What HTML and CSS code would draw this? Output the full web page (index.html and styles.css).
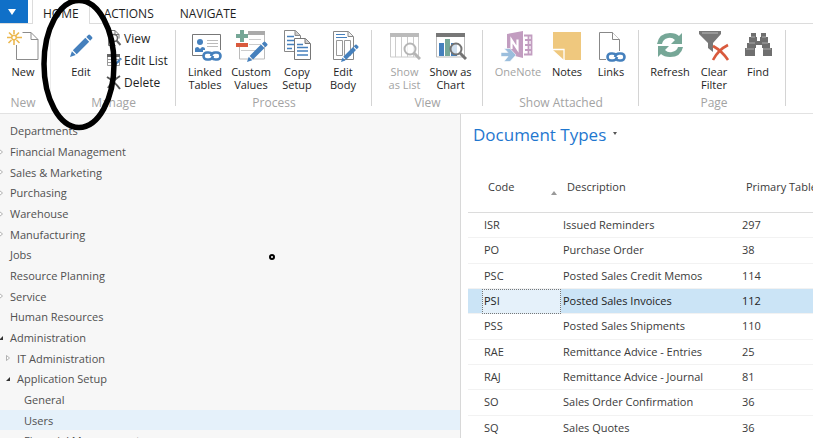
FILE: index.html
```html
<!DOCTYPE html>
<html lang="en">
<head>
<meta charset="utf-8">
<title>Document Types</title>
<link rel="stylesheet" href="styles.css">
</head>
<body>
<svg class="defs" aria-hidden="true">
  <symbol id="pencil" viewBox="0 0 24 24">
    <path d="M0 24l2-6 4 4zM3 17L16 4l4 4L7 21zM17 3l2-2q1-1 2 0l2 2q1 1 0 2l-2 2z" fill="#4580bd"/>
  </symbol>
  <symbol id="chain" viewBox="0 0 20 10">
    <g fill="none" stroke="#4580bd" stroke-width="2.6">
      <path d="M10 3Q9 1.500 6.500 1.500H5a3.500 3.500 0 0 0 0 7h2q3 0 4-3.500"/>
      <path d="M10 7q1 1.500 3.500 1.500H15a3.500 3.500 0 0 0 0-7h-2q-3 0-4 3.500"/>
    </g>
  </symbol>
  <symbol id="lens" viewBox="0 0 18 18">
    <circle cx="7" cy="7" r="5.500" fill="#fff" fill-opacity=".75" stroke="currentColor" stroke-width="2"/>
    <path d="M11 11l6 6" stroke="currentColor" stroke-width="3"/>
  </symbol>
  <symbol id="closed" viewBox="0 0 6 8"><path d="M2.500 1.500v5l3-2.500z" fill="#fff" stroke="#a0a0a0" stroke-width=".8"/></symbol>
  <symbol id="open" viewBox="0 0 6 8"><path d="M6 2v4H2z" fill="#333"/></symbol>
</svg>

<nav class="tabs">
  <button class="app-menu" aria-label="Application menu"><svg width="8" height="6"><path d="M0 0h8L4 6z" fill="#fff"/></svg></button>
  <a class="tab active" href="#">HOME</a>
  <a class="tab" href="#">ACTIONS</a>
  <a class="tab" href="#">NAVIGATE</a>
</nav>

<header class="ribbon">
  <section class="group g-new">
    <div class="tools">
      <button class="tool"><svg viewBox="0 0 32 32">
        <path d="M15.500 2.500H24l7 7V29.500H9.500V15" fill="none" stroke="#8c8c8c"/><path d="M24 2.500v7h7" fill="none" stroke="#8c8c8c"/>
        <g stroke="#ecb84f" stroke-width="1.600"><path d="M7 0v4M7 10v5M0 7.500h4M10 7.500h5M2 2.500l3 3M9.500 10l3 3M12 2.500l-3 3M4.500 10l-3 3"/></g><circle cx="7" cy="7.500" r="2.300" fill="#fff" stroke="#ecb84f" stroke-width="1.500"/></svg>New</button>
    </div>
    <h2>New</h2>
  </section>
  <section class="group g-manage">
    <div class="tools">
      <button class="tool narrow"><svg viewBox="0 0 32 32"><use href="#pencil" x="5" y="4" width="23" height="23"/></svg>Edit</button>
      <div class="stack">
        <button class="line"><svg viewBox="0 0 16 16"><path d="M2.500 15.500V.5H9l4 4v4M9 .5v4h4M2.500 15.500h7" fill="none" stroke="#777"/><circle cx="8" cy="8" r="3.500" fill="#fff" stroke="#666" stroke-width="1.500"/><path d="M10.500 10.500l4 4.500" stroke="#666" stroke-width="2"/></svg>View</button>
        <button class="line"><svg viewBox="0 0 16 16"><path d="M1.500 4v9.500h12V4M5.500 4v9M9.500 4v9M1 7.500h12M1 10.500h12" fill="none" stroke="#999"/><path d="M1 2h13v3H1z" fill="#666"/><use href="#pencil" x="7" y="5" width="9" height="10"/></svg>Edit List</button>
        <button class="line"><svg viewBox="0 0 16 16"><path d="M1 3q7 4 13 12M14 2Q6 7 2 14" fill="none" stroke="#555" stroke-width="2"/></svg>Delete</button>
      </div>
    </div>
    <h2>Manage</h2>
  </section>
  <section class="group g-process">
    <div class="tools">
      <button class="tool"><svg viewBox="0 0 32 32"><path d="M3.500 4.500h28v21h-28z" fill="#fff" stroke="#777"/><circle cx="11" cy="12" r="3" fill="#4580bd"/><path d="M6 22v-3q0-2 3-2l2 2 2-2q3 0 3 2v3z" fill="#4580bd"/><path d="M18 10.500h11M18 13.500h11M18 16.500h11" stroke="#bbb"/><path d="M14 20h18v10H14z" fill="#fff"/><use href="#chain" x="13" y="21" width="20" height="10"/></svg>Linked<br>Tables</button>
      <button class="tool"><svg viewBox="0 0 32 32"><path d="M4.500 17v12h25V2" fill="none" stroke="#bbb"/><path d="M13 1h17v4H13z" fill="#aaa"/><path d="M14 9.500h12M14 14.500h12M6 20.500h15" stroke="#ccc"/><path d="M5 0h4v4h4v4H9v4H5V8H1V4h4z" fill="#76a797"/><path d="M1 13h12v4H1z" fill="#d95a3d"/><use href="#pencil" x="12" y="11" width="21" height="21"/></svg>Custom<br>Values</button>
      <button class="tool"><svg viewBox="0 0 32 32"><path d="M3.500.5h11l5 5v16h-16z" fill="#fff" stroke="#888"/><path d="M14 .5v5h5" fill="#ccc" stroke="#888"/><path d="M6 6.500h7M6 10.500h9M6 14.500h9M6 18.500h5" stroke="#4580bd" stroke-width="1.300"/><path d="M13.500 8.500h11l5 5v16h-16z" fill="#fff" stroke="#777"/><path d="M24 8.500v5h5" fill="#ccc" stroke="#777"/><path d="M16 14.500h6M16 17.500h11M16 21h11M16 25h11" stroke="#4580bd" stroke-width="1.300"/></svg>Copy<br>Setup</button>
      <button class="tool"><svg viewBox="0 0 32 32"><path d="M6.500 1.500h15l5 5v23h-20z" fill="#fff" stroke="#888"/><path d="M21 1.500v5h5" fill="#eee" stroke="#888"/><path d="M9 4.500h9M9 7.500h11" stroke="#4580bd"/><path d="M9.500 10.500h6v15h-6zM17.500 10.500h6v15h-6z" fill="none" stroke="#999"/><use href="#pencil" x="14" y="14" width="18" height="18"/></svg>Edit<br>Body</button>
    </div>
    <h2>Process</h2>
  </section>
  <section class="group g-view">
    <div class="tools">
      <button class="tool off"><svg viewBox="0 0 32 32"><path d="M1.500 3v24h28V3M6.500 5v22M12.500 5v22M18.500 5v22M24.500 5v22" fill="none" stroke="#ccc"/><path d="M1 3h29v4H1z" fill="#bbb"/><g color="#b5b5b5"><use href="#lens" x="14" y="12" width="18" height="18"/></g></svg>Show<br>as List</button>
      <button class="tool"><svg viewBox="0 0 32 32"><path d="M1.500 3v24h28V3" fill="#fff" stroke="#bbb"/><path d="M1 3h29v4H1z" fill="#777"/><path d="M4 13h5v13H4z" fill="#4580bd"/><path d="M10 9h5v17h-5z" fill="#76a797"/><path d="M16 13h6v13h-6z" fill="#4580bd"/><g color="#737373"><use href="#lens" x="14" y="12" width="18" height="18"/></g></svg>Show as<br>Chart</button>
    </div>
    <h2>View</h2>
  </section>
  <section class="group g-attached">
    <div class="tools">
      <button class="tool wide off"><svg viewBox="0 0 32 32"><path d="M22 5.500h7.500v19H22M23 10h6M23 15h6M23 20h6M26.500 5v19" fill="none" stroke="#c29dc0" stroke-width="1.800"/><path d="M5 4L21 1v27L5 24z" fill="#c29dc0"/><path d="M9.500 19v-9l6 9V9.500" fill="none" stroke="#fff" stroke-width="2.200"/><path d="M-1 22.500H6l-4-4h6l6 6.500-6 6.500H2l4-5h-7z" fill="#9bbedd" stroke="#fff" stroke-width=".6"/></svg>OneNote</button>
      <button class="tool"><svg viewBox="0 0 32 32"><path d="M2 2h28v28H14L2 19z" fill="#efc87e"/><path d="M2 20h11v10z" fill="#efc87e"/><path d="M1.500 19.500h11.500V30" fill="none" stroke="#fff" stroke-width="1.300"/></svg>Notes</button>
      <button class="tool narrow"><svg viewBox="0 0 32 32"><path d="M4.500 2.500h13l7 7v20h-20z" fill="#fff" stroke="#888"/><path d="M17.500 2.500v7h7" fill="#fff" stroke="#888"/><path d="M11 21h20v9H11z" fill="#fff"/><use href="#chain" x="11" y="22" width="20" height="10"/></svg>Links</button>
    </div>
    <h2>Show Attached</h2>
  </section>
  <section class="group g-page">
    <div class="tools">
      <button class="tool"><svg viewBox="0 0 32 32"><path d="M3 14Q5 3 16 3q6 0 9 3l3-3v11H17l4-4q-3-3-7-2-5 1-6 6z" fill="#76a797"/><path d="M29 17q-2 10-13 10-6 0-9-3l-3 3V16h11l-4 4q3 3 7 2 5-1 6-5z" fill="#76a797"/></svg>Refresh</button>
      <button class="tool narrow"><svg viewBox="0 0 32 32"><path d="M1 1h22v3l-8 9v9l-5-4v-5L1 4z" fill="#777"/><path d="M4 3h16" stroke="#bbb"/><path d="M15 16q9 5 15 14M30 15q-10 5-15 15" fill="none" stroke="#d95a3d" stroke-width="2.600"/></svg>Clear<br>Filter</button>
      <button class="tool"><svg viewBox="0 0 32 32"><path d="M9 3h5v4h1v4h3V7h1V3h5v4h2v6h2v5h2v8h-9v-8h-1v-3h-6v3h-1v8H3v-8h2v-5h2V7h2z" fill="#6f6f6f"/><path d="M9 7h4M20 7h4M7 13h6M20 13h6M4 19h8M21 19h8" stroke="#aaa"/></svg>Find</button>
    </div>
    <h2>Page</h2>
  </section>
</header>

<div class="body">
  <nav class="sidebar">
    <ul>
      <li><a href="#"><svg></svg>Departments</a></li>
      <li><a href="#"><svg><use href="#closed"/></svg>Financial Management</a></li>
      <li><a href="#"><svg><use href="#closed"/></svg>Sales &amp; Marketing</a></li>
      <li><a href="#"><svg><use href="#closed"/></svg>Purchasing</a></li>
      <li><a href="#"><svg><use href="#closed"/></svg>Warehouse</a></li>
      <li><a href="#"><svg><use href="#closed"/></svg>Manufacturing</a></li>
      <li><a href="#"><svg></svg>Jobs</a></li>
      <li><a href="#"><svg></svg>Resource Planning</a></li>
      <li><a href="#"><svg><use href="#closed"/></svg>Service</a></li>
      <li><a href="#"><svg></svg>Human Resources</a></li>
      <li><a href="#"><svg><use href="#open"/></svg>Administration</a></li>
      <li class="level1"><a href="#"><svg><use href="#closed"/></svg>IT Administration</a></li>
      <li class="level1"><a href="#"><svg><use href="#open"/></svg>Application Setup</a></li>
      <li class="level2"><a href="#"><svg></svg>General</a></li>
      <li class="level2 selected"><a href="#"><svg></svg>Users</a></li>
      <li class="level2"><a href="#"><svg><use href="#closed"/></svg>Financial Management</a></li>
    </ul>
  </nav>
  <main class="content">
    <h1>Document Types <svg width="4" height="3"><path d="M0 0h4L2 3z" fill="#555"/></svg></h1>
    <table>
      <colgroup><col class="c-mark"><col class="c-code"><col class="c-desc"><col></colgroup>
      <thead><tr><th></th><th><span class="sorted">Code <svg width="6" height="4"><path d="M0 4h6L3 0z" fill="#999"/></svg></span></th><th>Description</th><th>Primary Table</th></tr></thead>
      <tbody>
        <tr><td></td><td>ISR</td><td>Issued Reminders</td><td>297</td></tr>
        <tr><td></td><td>PO</td><td>Purchase Order</td><td>38</td></tr>
        <tr><td></td><td>PSC</td><td>Posted Sales Credit Memos</td><td>114</td></tr>
        <tr class="current"><td></td><td class="focus">PSI</td><td>Posted Sales Invoices</td><td>112</td></tr>
        <tr><td></td><td>PSS</td><td>Posted Sales Shipments</td><td>110</td></tr>
        <tr><td></td><td>RAE</td><td>Remittance Advice - Entries</td><td>25</td></tr>
        <tr><td></td><td>RAJ</td><td>Remittance Advice - Journal</td><td>81</td></tr>
        <tr><td></td><td>SO</td><td>Sales Order Confirmation</td><td>36</td></tr>
        <tr><td></td><td>SQ</td><td>Sales Quotes</td><td>36</td></tr>
      </tbody>
    </table>
  </main>
</div>

<svg class="marks" aria-hidden="true">
  <ellipse cx="79" cy="64" rx="35" ry="63.500" fill="none" stroke="#000" stroke-width="5.500"/>
  <circle cx="272" cy="257" r="2" fill="#fff" stroke="#000" stroke-width="2"/>
</svg>
</body>
</html>
```
FILE: styles.css
```css
* { box-sizing: border-box; }
body {
  margin: 0;
  height: 100vh;
  display: flex;
  flex-direction: column;
  overflow: hidden;
  background: #fff;
  color: #1e1e1e;
  font: 11px/13px "Open Sans", "Noto Sans", sans-serif;
}
button { border: 0; padding: 0; background: none; color: inherit; font: inherit; }
a { color: inherit; text-decoration: none; }
h1, h2 { margin: 0; font-weight: 400; }
.defs { display: none; }

.tabs { display: flex; height: 24px; border-bottom: 1px solid #dcdcdc; }
.app-menu { width: 28px; height: 23px; margin-right: 4px; background: #1070c8; display: flex; align-items: center; justify-content: center; padding-right: 5px; }
.tab { height: 24px; padding: 0 12px 0 14px; line-height: 27px; font-size: 12px; }
.tab.active { padding: 0 10px; background: #fff; border: solid #dcdcdc; border-width: 0 1px; }

.ribbon { display: flex; height: 90px; padding-top: 6px; border-bottom: 1px solid #e2e2e2; }
.group { flex: none; height: 80px; display: flex; flex-direction: column; justify-content: space-between; background: linear-gradient(#d4d4d4, #d4d4d4) no-repeat right top / 1px 76px; }
.group h2 { font-size: 12px; line-height: 14px; color: #a3a3a3; text-align: center; }
.tools { display: flex; justify-content: center; }
.tool { flex: none; width: 46px; display: flex; flex-direction: column; align-items: center; white-space: nowrap; }
.tool.wide { width: 52px; }
.tool.narrow { width: 42px; }
.tool svg { width: 32px; height: 32px; margin-bottom: 3px; flex: none; overflow: visible; }
.off { color: #a3a3a3; }
.g-new { width: 51px; padding-right: 5px; background-image: linear-gradient(#ececec, #ececec); }
.g-manage { width: 125px; }
.g-manage .tools { justify-content: flex-start; padding-left: 9px; gap: 4px; }
.g-process { width: 196px; }
.g-view { width: 111px; }
.g-attached { width: 156px; }
.g-attached .tools { justify-content: flex-start; padding-left: 9px; }
.g-page { width: 147px; padding-left: 3px; }
.stack { display: flex; flex-direction: column; margin: -3px 0; font-size: 12px; }
.line { display: flex; align-items: center; gap: 2px; height: 22px; white-space: nowrap; }
.line svg { width: 16px; height: 16px; }

.body { flex: 1; min-height: 0; display: grid; grid-template-columns: 461fr 352fr; grid-template-rows: 100%; }
.sidebar { min-width: 0; background: #f7f7f7; border-right: 1px solid #d8d8d8; color: #505050; overflow: hidden; }
.sidebar ul { list-style: none; margin: 0; padding: 6px 0 0; }
.sidebar li { height: 21px; }
.sidebar li:nth-child(3n) { height: 20px; }
.sidebar a { display: flex; align-items: center; height: 100%; gap: 7px; }
.sidebar svg { width: 6px; height: 8px; margin-left: -3px; flex: none; }
.level1 { padding-left: 7px; }
.level2 { padding-left: 14px; }
.selected { background: #e5f1fa; }

.content { min-width: 0; padding-left: 7px; overflow: hidden; }
h1 { padding: 9px 0 0 5px; font-size: 17px; line-height: 24px; color: #1f77cf; }
h1 svg { vertical-align: 6px; margin-left: 2px; }
table { width: 100%; margin-top: 12px; table-layout: fixed; border-collapse: separate; border-spacing: 0; color: #3a3a3a; }
.c-mark { width: 14px; }
.c-code { width: 79px; }
.c-desc { width: 179px; }
th, td { padding: 0 0 0 2px; text-align: left; font-weight: 400; white-space: nowrap; overflow: hidden; }
th { height: 54px; padding: 2px 0 0 6px; border-bottom: 1px solid #dcdcdc; }
td { height: 25px; padding-bottom: 2px; border-bottom: 1px solid #f2f2f2; }
tr:nth-child(3n+2) td { height: 26px; }
.sorted { display: flex; justify-content: space-between; padding-right: 4px; }
.sorted svg { align-self: flex-end; margin-bottom: -2px; overflow: visible; }
.current td { background: #cbe4f6; color: #222; }
.current .focus { background: #e5f1fa; border: 1px dotted #777; padding-left: 1px; }

.marks { position: absolute; top: 0; left: 0; width: 100%; height: 100%; pointer-events: none; }
```
